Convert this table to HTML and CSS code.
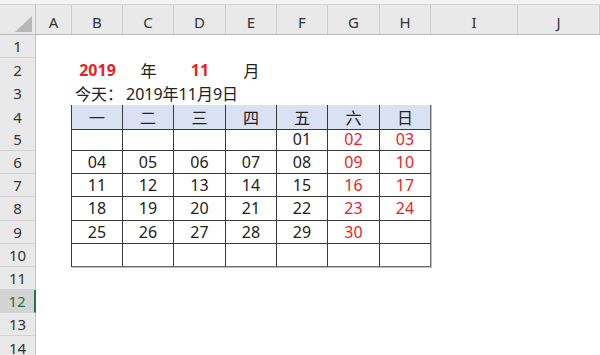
FILE: index.html
```html
<!DOCTYPE html>
<html lang="zh">
<head>
<meta charset="utf-8">
<title>Sheet</title>
<link rel="stylesheet" href="styles.css">
</head>
<body>
<div class="topbar"></div>
<div class="row colhead">
  <div class="h corner"><svg width="17" height="16" viewBox="0 0 17 16"><polygon points="0,16 17,16 17,0" fill="#b7b7b7"/></svg></div>
  <div class="h">A</div><div class="h">B</div><div class="h">C</div><div class="h">D</div><div class="h">E</div>
  <div class="h">F</div><div class="h">G</div><div class="h">H</div><div class="h">I</div><div class="h">J</div>
</div>
<div class="row"><div class="rh">1</div></div>
<div class="row"><div class="rh">2</div><div class="c"></div>
  <div class="c ctr red b">2019</div><div class="c ctr">年</div><div class="c ctr red b">11</div><div class="c ctr">月</div></div>
<div class="row"><div class="rh">3</div><div class="c"></div>
  <div class="c lft tt">今天：</div><div class="c lft tt">2019年11月9日</div><div class="c tt"></div><div class="c tt"></div><div class="c tt"></div><div class="c tt"></div><div class="c tt"></div></div>
<div class="row"><div class="rh">4</div><div class="c tl"></div>
  <div class="c ctr t hd">一</div><div class="c ctr t hd">二</div><div class="c ctr t hd">三</div><div class="c ctr t hd">四</div><div class="c ctr t hd">五</div><div class="c ctr t hd">六</div><div class="c ctr t hd te">日</div></div>
<div class="row"><div class="rh">5</div><div class="c tl"></div>
  <div class="c ctr t"></div><div class="c ctr t"></div><div class="c ctr t"></div><div class="c ctr t"></div><div class="c ctr t">01</div><div class="c ctr t red">02</div><div class="c ctr t te red">03</div></div>
<div class="row"><div class="rh">6</div><div class="c tl"></div>
  <div class="c ctr t">04</div><div class="c ctr t">05</div><div class="c ctr t">06</div><div class="c ctr t">07</div><div class="c ctr t">08</div><div class="c ctr t red">09</div><div class="c ctr t te red">10</div></div>
<div class="row"><div class="rh">7</div><div class="c tl"></div>
  <div class="c ctr t">11</div><div class="c ctr t">12</div><div class="c ctr t">13</div><div class="c ctr t">14</div><div class="c ctr t">15</div><div class="c ctr t red">16</div><div class="c ctr t te red">17</div></div>
<div class="row"><div class="rh">8</div><div class="c tl"></div>
  <div class="c ctr t">18</div><div class="c ctr t">19</div><div class="c ctr t">20</div><div class="c ctr t">21</div><div class="c ctr t">22</div><div class="c ctr t red">23</div><div class="c ctr t te red">24</div></div>
<div class="row"><div class="rh">9</div><div class="c tl"></div>
  <div class="c ctr t">25</div><div class="c ctr t">26</div><div class="c ctr t">27</div><div class="c ctr t">28</div><div class="c ctr t">29</div><div class="c ctr t red">30</div><div class="c ctr t te"></div></div>
<div class="row"><div class="rh">10</div><div class="c tl"></div>
  <div class="c t tb"></div><div class="c t tb"></div><div class="c t tb"></div><div class="c t tb"></div><div class="c t tb"></div><div class="c t tb"></div><div class="c t tb te"></div></div>
<div class="row"><div class="rh">11</div></div>
<div class="row"><div class="rh sel">12</div></div>
<div class="row"><div class="rh">13</div></div>
<div class="row"><div class="rh">14</div></div>
</body>
</html>
```
FILE: styles.css
```css
* { box-sizing: border-box; }
body {
  margin: 0;
  width: 600px;
  height: 355px;
  overflow: hidden;
  background: #fff;
  font-family: "Noto Sans", "Noto Sans CJK SC", sans-serif;
  color: #222;
}
.topbar {
  height: 5px;
  background: #f3f3f3;
  border-bottom: 1px solid #d4d4d4;
}
.row {
  display: grid;
  grid-template-columns: 36px 36px 51px 51px 52px 51px 51px 52px 51px 87px 1fr;
  height: 23.2px;
}
.colhead {
  height: 30px;
  background: #e9e9e9;
  border-bottom: 1px solid #b9b9b9;
}
.h {
  display: flex;
  justify-content: center;
  align-items: center;
  padding-top: 5px;
  font-size: 15px;
  color: #333;
  border-right: 1px solid #cdcdcd;
}
.corner {
  justify-content: flex-end;
  align-items: flex-end;
  padding: 0 3px 2px 0;
  border-right: 1px solid #c3c3c3;
}
.corner svg { display: block; }
.rh {
  display: flex;
  justify-content: center;
  align-items: center;
  background: #e9e9e9;
  border-right: 1px solid #c3c3c3;
  border-bottom: 1px solid #d3d3d3;
  font-size: 15px;
  color: #333;
}
.rh.sel {
  background: #d3d3d3;
  color: #217346;
  border-right: 2px solid #217346;
}
.c {
  display: flex;
  align-items: center;
  font-size: 16px;
  white-space: nowrap;
  min-width: 0;
}
.ctr { justify-content: center; }
.lft { padding-left: 3px; }
.red { color: #ee1d27; }
.b { font-weight: 700; }
.tt { border-bottom: 1px solid #3a3a3a; }
.tl { border-right: 1px solid #3a3a3a; }
.t {
  border-right: 1px solid #3a3a3a;
  border-bottom: 1px solid #3a3a3a;
}
.hd { background: #d9e1f2; }
.t.te {
  border-right: 1px solid #6e6e6e;
  box-shadow: 1px 0 0 #bdbdbd;
}
.t.tb {
  border-bottom: 1px solid #6e6e6e;
  box-shadow: 0 1px 0 #bdbdbd;
}
.t.tb.te {
  box-shadow: 1px 0 0 #bdbdbd, 0 1px 0 #bdbdbd, 1px 1px 0 #bdbdbd;
}
```
